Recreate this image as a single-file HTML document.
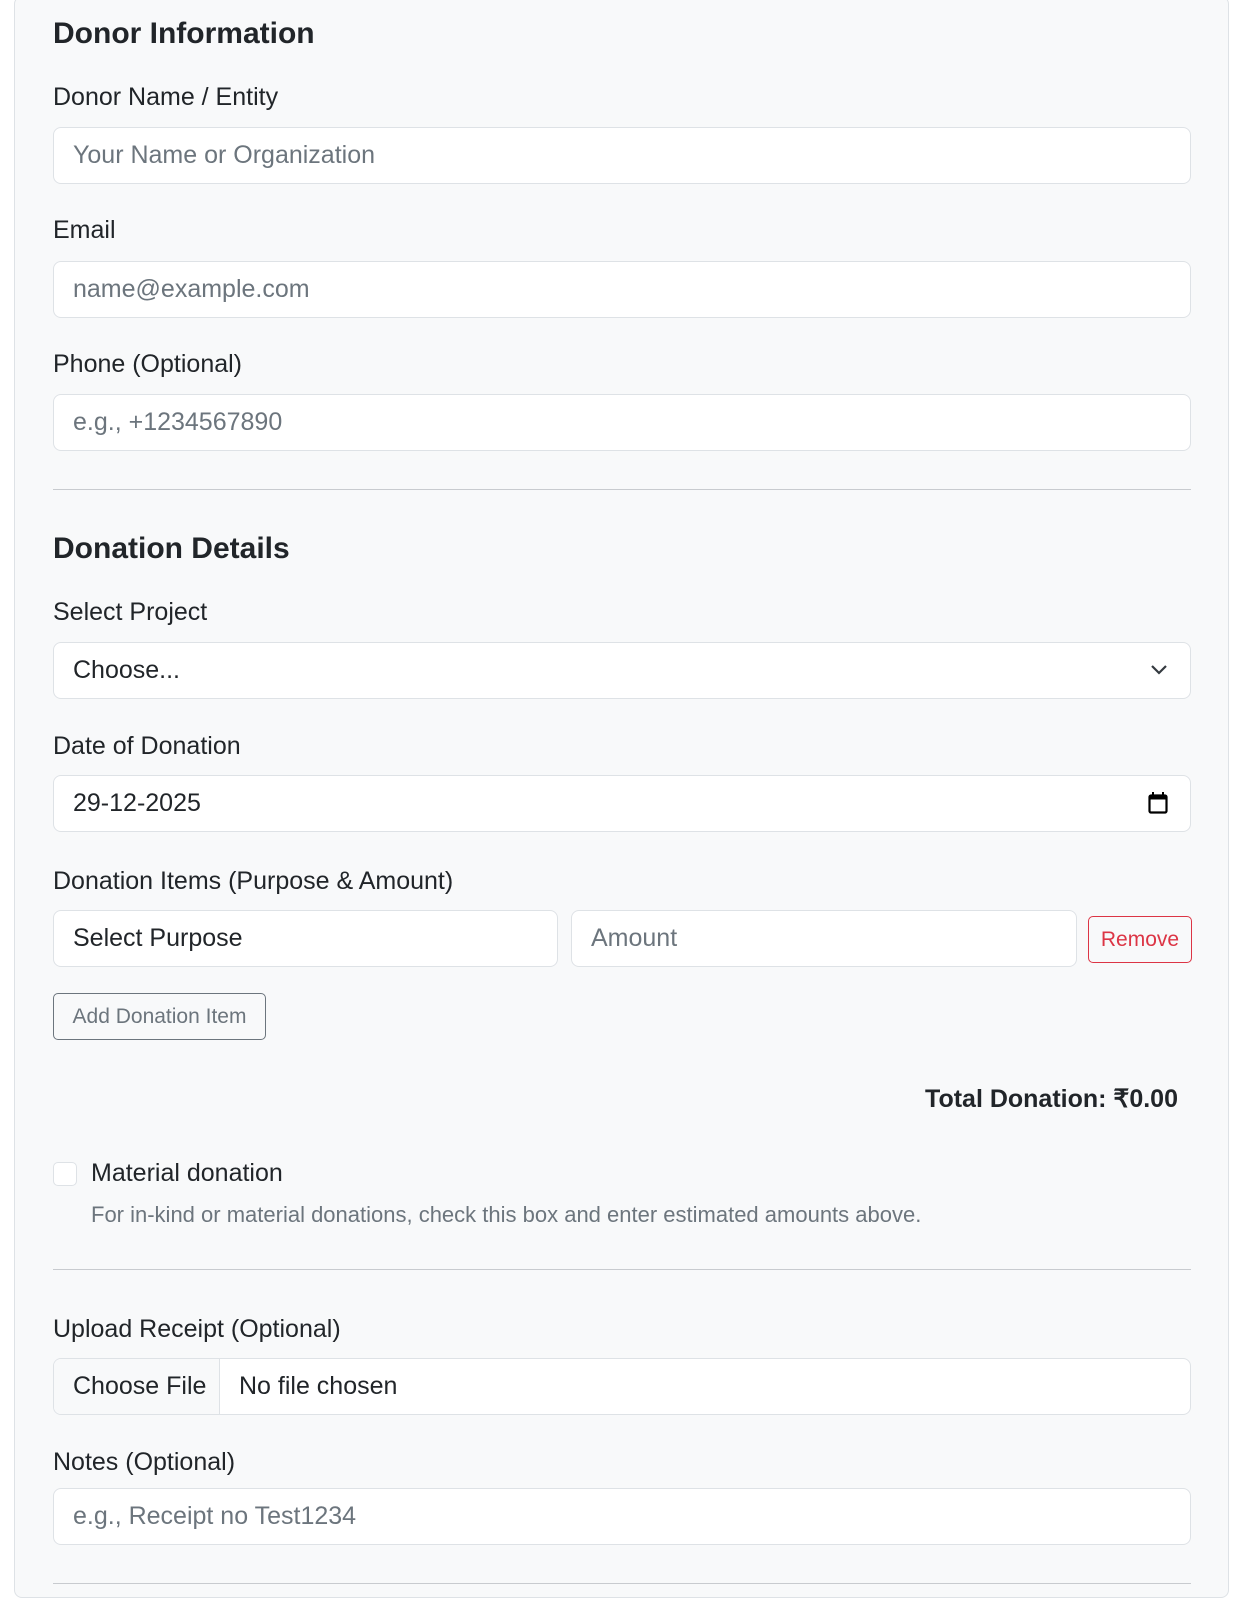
<!DOCTYPE html>
<html><head><meta charset="utf-8"><style>
*{box-sizing:border-box;margin:0;padding:0}
body{width:1248px;height:1600px;background:#fff;font-family:"Liberation Sans",sans-serif;color:#212529;position:relative;overflow:hidden}
.card{position:absolute;left:14px;top:-4px;width:1215px;height:1602px;background:#f8f9fa;border:1px solid #dee2e6;border-radius:8px}
.a{position:absolute}
h4{position:absolute;left:53px;font-size:30px;font-weight:bold;line-height:36px}
.lbl{position:absolute;left:53px;font-size:25px;line-height:30px}
.in{position:absolute;left:53px;width:1138px;height:57px;background:#fff;border:1px solid #dee2e6;border-radius:8px;font-size:25px;line-height:55px;padding-left:19px;color:#6c757d}
.dark{color:#212529}
.hr{position:absolute;left:53px;width:1138px;height:1px;background:#c8cbcf}
</style></head><body>
<div class="card"></div>
<h4 style="top:16px">Donor Information</h4>
<div class="lbl" style="top:82px">Donor Name / Entity</div>
<div class="in" style="top:127px">Your Name or Organization</div>
<div class="lbl" style="top:215px">Email</div>
<div class="in" style="top:261px">name@example.com</div>
<div class="lbl" style="top:349px">Phone (Optional)</div>
<div class="in" style="top:394px">e.g., +1234567890</div>
<div class="hr" style="top:489px"></div>
<h4 style="top:531px">Donation Details</h4>
<div class="lbl" style="top:597px">Select Project</div>
<div class="in dark" style="top:642px">Choose...
<svg class="a" style="right:22px;top:20px" width="18" height="14" viewBox="0 0 18 14"><path d="M2 3l7 7 7-7" fill="none" stroke="#343a40" stroke-width="2.2"/></svg></div>
<div class="lbl" style="top:731px">Date of Donation</div>
<div class="in dark" style="top:775px">29-12-2025
<svg class="a" style="right:22px;top:16px" width="20" height="22" viewBox="0 0 20 22"><rect x="1.5" y="3.5" width="17" height="17" rx="1.5" fill="none" stroke="#000" stroke-width="2.2"/><rect x="1.5" y="3.5" width="17" height="4" fill="#000"/><path d="M5 0v5M15 0v5" stroke="#000" stroke-width="2"/></svg></div>
<div class="lbl" style="top:866px">Donation Items (Purpose &amp; Amount)</div>
<div class="in dark" style="top:910px;width:505px">Select Purpose</div>
<div class="in" style="top:910px;left:571px;width:506px">Amount</div>
<div class="a" style="left:1088px;top:916px;width:104px;height:47px;border:1px solid #dc3545;border-radius:5px;color:#dc3545;font-size:21px;line-height:45px;text-align:center">Remove</div>
<div class="a" style="left:53px;top:993px;width:213px;height:47px;border:1px solid #6c757d;border-radius:5px;color:#6c757d;font-size:21px;line-height:45px;text-align:center">Add Donation Item</div>
<div class="a" style="right:70px;top:1084px;font-size:25px;font-weight:bold">Total Donation: ₹0.00</div>
<div class="a" style="left:53px;top:1162px;width:24px;height:24px;border:1px solid #dee2e6;border-radius:5px;background:#fff"></div>
<div class="a" style="left:91px;top:1159px;font-size:25px">Material donation</div>
<div class="a" style="left:91px;top:1202px;font-size:22px;color:#6c757d">For in-kind or material donations, check this box and enter estimated amounts above.</div>
<div class="hr" style="top:1269px"></div>
<div class="lbl" style="top:1314px">Upload Receipt (Optional)</div>
<div class="in dark" style="top:1358px;padding-left:0;overflow:hidden"><span style="display:inline-block;width:166px;height:55px;background:#f8f9fa;border-right:1px solid #dee2e6;padding-left:19px;vertical-align:top">Choose File</span><span style="padding-left:19px">No file chosen</span></div>
<div class="lbl" style="top:1447px">Notes (Optional)</div>
<div class="in" style="top:1488px">e.g., Receipt no Test1234</div>
<div class="hr" style="top:1583px"></div>
</body></html>
